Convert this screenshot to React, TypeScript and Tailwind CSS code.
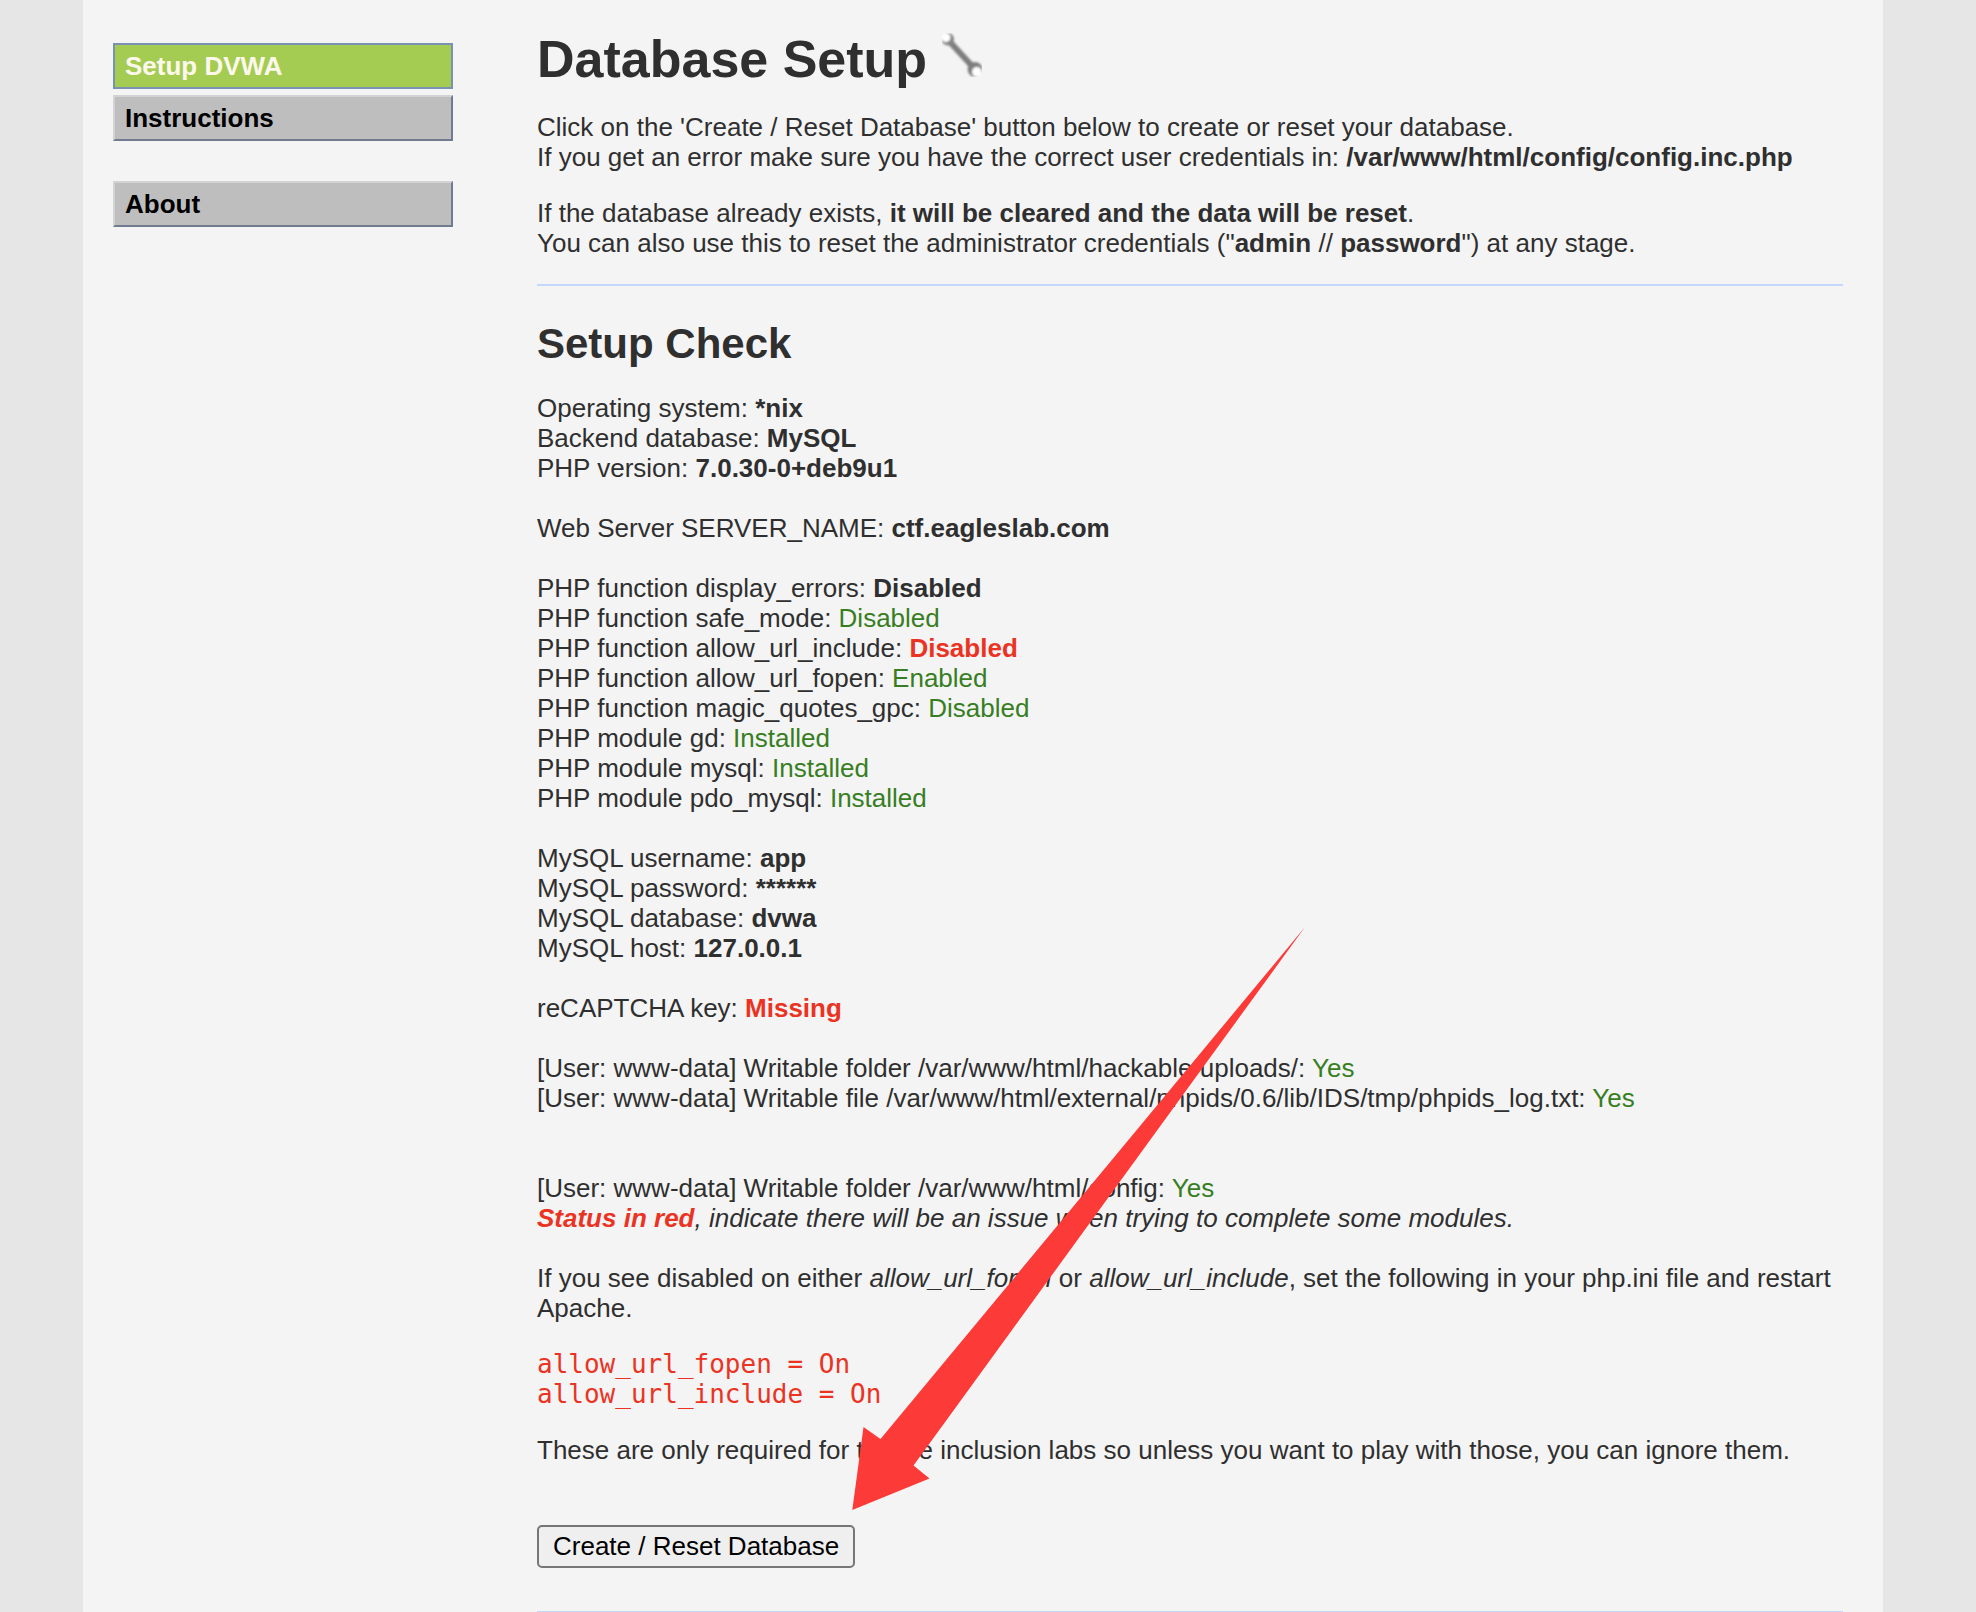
import type { ReactNode } from "react";
import clsx from "clsx";

const menu = [
  [
    { label: "Setup DVWA", href: "#setup", selected: true },
    { label: "Instructions", href: "#instructions", selected: false },
  ],
  [{ label: "About", href: "#about", selected: false }],
];

const Ok = ({ children }: { children: ReactNode }) => (
  <span className="text-[#377e22]">{children}</span>
);

const Failed = ({ children }: { children: ReactNode }) => (
  <span className="font-bold text-[#eb3323]">{children}</span>
);

const Divider = () => <hr className="border-0 h-[2px] bg-[#c4d7fc]" />;

const Spanner = () => (
  <svg className="inline-block align-baseline w-10 h-11" viewBox="0 0 40 44" fill="none" aria-hidden="true">
    <defs>
      <filter id="soft" x="-10%" y="-10%" width="120%" height="120%">
        <feGaussianBlur stdDeviation="0.8" />
      </filter>
    </defs>
    <g filter="url(#soft)">
      <path d="M8 9L30 33" stroke="#7e7e7e" strokeWidth="6" />
      <circle cx="5.8" cy="6.2" r="6.2" fill="#848484" />
      <circle cx="33" cy="36.5" r="7.4" fill="#7e7e7e" />
      <circle cx="4" cy="4.6" r="4.4" fill="#fff" />
      <circle cx="34.8" cy="38.8" r="4.8" fill="#fff" />
    </g>
  </svg>
);

const Sidebar = () => (
  <nav className="w-[340px] shrink-0 pt-[43px] flex flex-col gap-10">
    {menu.map((group, i) => (
      <ul key={i} className="flex flex-col gap-[6px]">
        {group.map((item) => (
          <li key={item.label}>
            <a
              href={item.href}
              className={clsx(
                "block border-2 px-[10px] py-[6px] font-bold",
                item.selected
                  ? "bg-[#a5cc52] border-[#7a91b3] text-[#fcf8ec]"
                  : "bg-[#bebebe] border-t-[#d1d3d4] border-l-[#d1d3d4] border-r-[#707b8f] border-b-[#707b8f] text-black"
              )}
            >
              {item.label}
            </a>
          </li>
        ))}
      </ul>
    ))}
  </nav>
);

const Arrow = () => (
  <svg
    className="absolute left-[315px] top-[927px] w-[453px] h-[583px] pointer-events-none"
    viewBox="852 927 453 583"
    aria-hidden="true"
  >
    <path d="M852.3 1510L863.5 1427L880.5 1439L1305 927L913.5 1465.5L929.5 1478.5Z" fill="#fc3a38" />
  </svg>
);

const App = () => {
  return (
    <div className="min-h-screen bg-[#e6e6e6] pr-[10px] text-[26px] leading-[30px] text-[#2f2f2f] font-['Liberation_Sans',Arial,sans-serif]">
      <div className="max-w-[1800px] min-h-screen mx-auto bg-[#f4f4f4] pl-[30px] pr-10 flex gap-[84px]">
        <Sidebar />

        <main className="relative flex-1 min-w-0 pt-[29px]">
          <h1 className="text-[52px] leading-[60px] font-bold">
            Database Setup <Spanner />
          </h1>

          <p className="mt-[23px]">
            Click on the 'Create / Reset Database' button below to create or reset your database.
            <br />
            If you get an error make sure you have the correct user credentials in:{" "}
            <b>/var/www/html/config/config.inc.php</b>
          </p>
          <p className="my-[26px]">
            If the database already exists, <b>it will be cleared and the data will be reset</b>.
            <br />
            You can also use this to reset the administrator credentials ("<b>admin</b> // <b>password</b>") at any
            stage.
          </p>

          <Divider />

          <h2 className="mt-[34px] mb-[25px] text-[42px] leading-[48px] font-bold">Setup Check</h2>

          <div>
            Operating system: <b>*nix</b>
            <br />
            Backend database: <b>MySQL</b>
            <br />
            PHP version: <b>7.0.30-0+deb9u1</b>
            <br />
            <br />
            Web Server SERVER_NAME: <b>ctf.eagleslab.com</b>
            <br />
            <br />
            PHP function display_errors: <b>Disabled</b>
            <br />
            PHP function safe_mode: <Ok>Disabled</Ok>
            <br />
            PHP function allow_url_include: <Failed>Disabled</Failed>
            <br />
            PHP function allow_url_fopen: <Ok>Enabled</Ok>
            <br />
            PHP function magic_quotes_gpc: <Ok>Disabled</Ok>
            <br />
            PHP module gd: <Ok>Installed</Ok>
            <br />
            PHP module mysql: <Ok>Installed</Ok>
            <br />
            PHP module pdo_mysql: <Ok>Installed</Ok>
            <br />
            <br />
            MySQL username: <b>app</b>
            <br />
            MySQL password: <b>******</b>
            <br />
            MySQL database: <b>dvwa</b>
            <br />
            MySQL host: <b>127.0.0.1</b>
            <br />
            <br />
            reCAPTCHA key: <Failed>Missing</Failed>
            <br />
            <br />
            [User: www-data] Writable folder /var/www/html/hackable/uploads/: <Ok>Yes</Ok>
            <br />
            [User: www-data] Writable file /var/www/html/external/phpids/0.6/lib/IDS/tmp/phpids_log.txt: <Ok>Yes</Ok>
            <br />
            <br />
            <br />
            [User: www-data] Writable folder /var/www/html/config: <Ok>Yes</Ok>
            <br />
            <i>
              <Failed>Status in red</Failed>, indicate there will be an issue when trying to complete some modules.
            </i>
            <br />
            <br />
            If you see disabled on either <i>allow_url_fopen</i> or <i>allow_url_include</i>, set the following in your
            php.ini file and restart Apache.
          </div>

          <pre className="my-[26px] text-[#eb3323] font-['DejaVu_Sans_Mono',monospace]">
            {"allow_url_fopen = On\nallow_url_include = On"}
          </pre>

          <p>
            These are only required for the file inclusion labs so unless you want to play with those, you can ignore
            them.
          </p>

          <form className="mt-[60px] mb-[43px] flex" onSubmit={(e) => e.preventDefault()}>
            <button
              type="submit"
              className="h-[43px] px-[14px] pb-[2px] border-2 border-[#767676] rounded-[5px] bg-[#efefef] text-black"
            >
              Create / Reset Database
            </button>
          </form>

          <Divider />

          <Arrow />
        </main>
      </div>
    </div>
  );
};

export default App;
